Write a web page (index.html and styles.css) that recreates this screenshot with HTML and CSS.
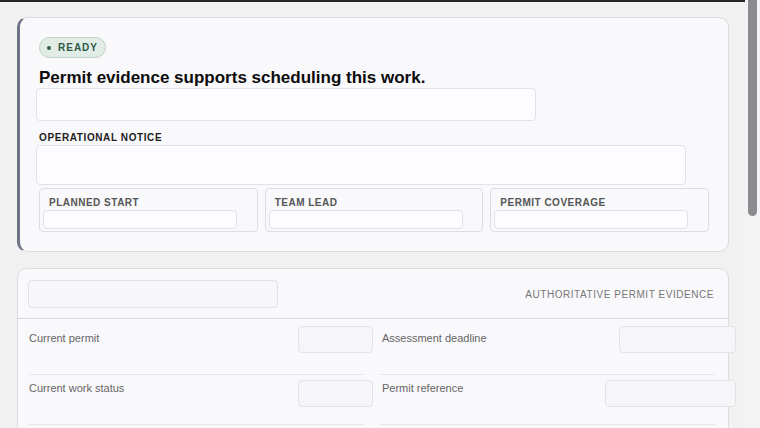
FILE: index.html
```html
<!DOCTYPE html>
<html lang="en">
<head>
<meta charset="utf-8">
<title>Permit evidence</title>
<link rel="stylesheet" href="styles.css">
</head>
<body>
<div class="page">
  <section class="card card-status">
    <span class="badge"><span class="badge-dot"></span>READY</span>
    <h1 class="headline">Permit evidence supports scheduling this work.</h1>
    <input class="field field-summary" type="text" aria-label="Summary">
    <div class="section-label">OPERATIONAL NOTICE</div>
    <textarea class="field field-notice" aria-label="Operational notice"></textarea>
    <div class="facts">
      <div class="fact">
        <div class="fact-label">PLANNED START</div>
        <input class="field fact-input" type="text" aria-label="Planned start">
      </div>
      <div class="fact">
        <div class="fact-label">TEAM LEAD</div>
        <input class="field fact-input" type="text" aria-label="Team lead">
      </div>
      <div class="fact">
        <div class="fact-label">PERMIT COVERAGE</div>
        <input class="field fact-input" type="text" aria-label="Permit coverage">
      </div>
    </div>
  </section>

  <section class="card card-evidence">
    <header class="evidence-head">
      <input class="field head-input" type="text" aria-label="Evidence search">
      <span class="evidence-title">AUTHORITATIVE PERMIT EVIDENCE</span>
    </header>
    <div class="evidence-grid">
      <div class="row">
        <span class="row-label">Current permit</span>
        <input class="field row-input row-input-narrow" type="text" aria-label="Current permit">
      </div>
      <div class="row row-right">
        <span class="row-label">Assessment deadline</span>
        <input class="field row-input row-input-wide" type="text" aria-label="Assessment deadline">
      </div>
      <div class="row">
        <span class="row-label">Current work status</span>
        <input class="field row-input row-input-narrow" type="text" aria-label="Current work status">
      </div>
      <div class="row row-right">
        <span class="row-label">Permit reference</span>
        <input class="field row-input row-input-wider" type="text" aria-label="Permit reference">
      </div>
    </div>
  </section>
</div>
<div class="scrollbar" aria-hidden="true"><div class="scrollbar-thumb"></div></div>
</body>
</html>
```

FILE: styles.css
```css
body {
  margin: 0;
  display: flex;
  align-items: flex-start;
  background: #f1f1f2;
  font-family: "Liberation Sans", Arial, sans-serif;
  color: #111;
}

.page {
  flex: 1;
  min-width: 0;
  box-sizing: border-box;
  border-top: 2px solid #262626;
  padding: 15px 16px 17px 17px;
}

.scrollbar {
  flex: none;
  box-sizing: border-box;
  width: 15px;
  height: 428px;
  padding: 0 3px;
  background: #f3f3f4;
}

.scrollbar-thumb {
  height: 216px;
  border-radius: 0 0 5px 5px;
  background: #8b8a8e;
}

.card {
  background: #f9f8fb;
  border: 1px solid #dcdbe0;
  border-radius: 10px;
}

.field {
  display: block;
  box-sizing: border-box;
  margin: 0;
  padding: 0 6px;
  border: 1px solid #e2e1e5;
  border-radius: 4px;
  background: #fdfcfe;
  font: inherit;
  font-size: 12px;
  color: #222;
  resize: none;
  outline: none;
}

/* status card */
.card-status {
  display: flex;
  flex-direction: column;
  align-items: flex-start;
  padding: 19px;
  border-left: 3px solid #6f7388;
}

.badge {
  display: inline-flex;
  align-items: center;
  gap: 7px;
  box-sizing: border-box;
  height: 21px;
  padding: 0 7px;
  border: 1px solid #bfd2c6;
  border-radius: 11px;
  background: #e2ece6;
  color: #2e5a47;
  font-size: 10px;
  font-weight: 700;
  letter-spacing: 1px;
}

.badge-dot {
  width: 4px;
  height: 4px;
  border-radius: 50%;
  background: #2e5a47;
}

.headline {
  margin: 10px 0 0;
  font-size: 17px;
  line-height: 20px;
  font-weight: 700;
  color: #0c0c0c;
}

.field-summary {
  margin-left: -3px;
  width: 500px;
  height: 33px;
}

.section-label {
  margin: 11px 0 1px;
  font-size: 10px;
  line-height: 12px;
  font-weight: 700;
  letter-spacing: 0.6px;
  color: #1e1e1e;
}

.field-notice {
  margin-left: -3px;
  width: 650px;
  height: 40px;
}

.facts {
  align-self: stretch;
  display: grid;
  grid-template-columns: repeat(3, 1fr);
  gap: 7px;
  margin-top: 3px;
}

.fact {
  padding: 8px 3px 2px;
  border: 1px solid #dedde2;
  border-radius: 4px;
}

.fact-label {
  padding-left: 6px;
  font-size: 10px;
  line-height: 12px;
  font-weight: 700;
  letter-spacing: 0.5px;
  color: #555;
}

.fact-input {
  margin-top: 1px;
  width: 194px;
  height: 19px;
}

/* evidence card */
.card-evidence {
  margin-top: 16px;
}

.evidence-head {
  display: flex;
  align-items: center;
  justify-content: space-between;
  padding: 11px 14px 10px 10px;
  border-bottom: 1px solid #d9d8dd;
}

.head-input {
  width: 250px;
  height: 28px;
  background: #f7f6f9;
}

.evidence-title {
  font-size: 10px;
  letter-spacing: 0.55px;
  color: #777;
}

.evidence-grid {
  display: grid;
  grid-template-columns: 1fr 1fr;
  column-gap: 16px;
  padding: 0 13px 16px 11px;
}

.row {
  display: flex;
  align-items: flex-start;
  justify-content: space-between;
  padding: 5px 0 17px;
  border-bottom: 1px solid #e6e5ea;
}

.row:nth-child(-n+2) {
  padding: 7px 0 21px;
}

.row-label {
  margin-top: 2px;
  font-size: 11px;
  line-height: 13px;
  color: #666;
}

.row:nth-child(-n+2) .row-label {
  margin-top: 6px;
}

.row-right .row-label {
  padding-left: 2px;
}

.row-input {
  height: 27px;
  background: #f6f6f8;
  border-color: #e3e3e6;
}

.row-input-narrow {
  width: 75px;
  margin-right: -9px;
}

.row-input-wide {
  width: 117px;
  margin-right: -21px;
}

.row-input-wider {
  width: 131px;
  margin-right: -21px;
}
```
